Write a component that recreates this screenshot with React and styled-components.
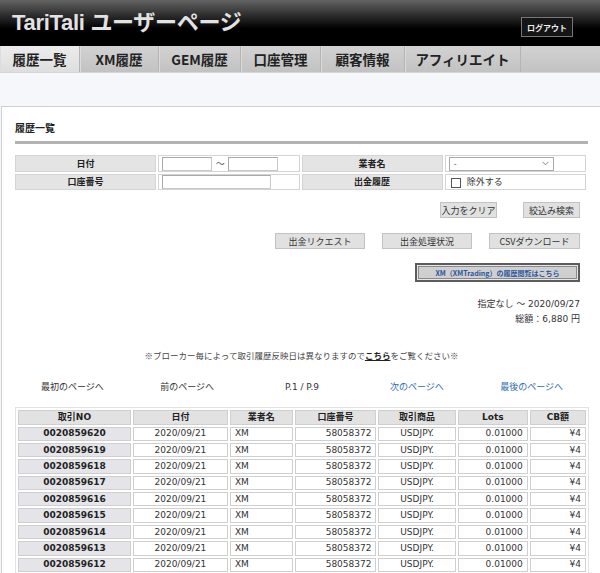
import React from 'react'
import styled, { createGlobalStyle } from 'styled-components'

const GlobalStyle = createGlobalStyle`
  html, body {
    margin: 0;
    padding: 0;
    background: #f5f7fb;
    font-family: "DejaVu Sans", "Noto Sans CJK JP", sans-serif;
    color: #333;
  }
`

const Header = styled.header`
  height: 46px;
  background: linear-gradient(#646464 0%, #2a2a2a 35%, #000 62%, #000 100%);
  display: flex;
  align-items: center;
  justify-content: space-between;
  padding: 0 27px 0 12px;

  h1 {
    margin: 0;
    margin-top: -7px;
    font-family: "Liberation Sans", "Noto Sans CJK JP", sans-serif;
    font-size: 22px;
    font-weight: 700;
    color: #e2e2e2;
    letter-spacing: -0.3px;
  }
`

const Logout = styled.button`
  width: 52px;
  height: 20px;
  margin-top: 8px;
  padding: 0;
  background: #151515;
  border: 1px solid #777;
  color: #eee;
  font-family: "Noto Sans CJK JP", sans-serif;
  font-size: 8px;
  font-weight: 700;
`

const Nav = styled.nav`
  height: 26px;
  display: flex;
  background: linear-gradient(#d2d2d2, #c2c2c2);
  border-bottom: 1px solid #d6d6d6;
`

const Tab = styled.a`
  display: flex;
  align-items: center;
  justify-content: center;
  box-sizing: border-box;
  width: ${(p) => p.w}px;
  font-family: "Noto Sans CJK JP", sans-serif;
  font-size: 13.5px;
  font-weight: 700;
  color: #222;
  border-right: 1px solid #b4b4b4;
  box-shadow: inset 1px 0 0 #dcdcdc;
  background: ${(p) => (p.active ? 'linear-gradient(#ececec, #dedede)' : 'transparent')};
`

const Spacer = styled.div`
  height: 33px;
`

const Panel = styled.main`
  margin-left: 1px;
  background: #fff;
  border-top: 1px solid #cfcfcf;
  border-left: 1px solid #cfcfcf;
  padding: 14px 12px 20px 13px;
`

const Title = styled.h2`
  margin: 0;
  font-family: "Noto Sans CJK JP", sans-serif;
  font-size: 10px;
  font-weight: 700;
  color: #222;
  line-height: 13px;
  padding-bottom: 7px;
  border-bottom: 3px solid #b2b2b2;
`

const FormTable = styled.table`
  margin-top: 9px;
  width: 575px;
  border-spacing: 2px;
  margin-left: -2px;
  table-layout: fixed;
  font-size: 9px;

  td {
    height: 14px;
    padding: 0 3px;
    border: 1px solid #d4d4d4;
    font-family: "Noto Sans CJK JP", sans-serif;
  }
`

const LabelCell = styled.td`
  background: #e4e4e4;
  text-align: center;
  font-weight: 700;
  color: #222;
`

const InputBox = styled.span`
  display: inline-block;
  vertical-align: middle;
  box-sizing: border-box;
  width: ${(p) => p.w}px;
  height: 14px;
  border: 1px solid #a9a9a9;
  border-right-color: #c8c8c8;
  border-bottom-color: #c8c8c8;
  background: #fff;
`

const Tilde = styled.span`
  display: inline-block;
  width: 16px;
  text-align: center;
  vertical-align: middle;
  color: #555;
`

const Select = styled.span`
  display: inline-flex;
  align-items: center;
  justify-content: space-between;
  vertical-align: middle;
  box-sizing: border-box;
  width: 105px;
  height: 14px;
  padding: 0 4px;
  border: 1px solid #a9a9a9;
  font-size: 8px;
  color: #333;
`

const Check = styled.span`
  display: inline-block;
  vertical-align: middle;
  width: 8px;
  height: 8px;
  border: 1px solid #555;
  margin: 0 6px 0 2px;
`

const ButtonRow = styled.div`
  display: flex;
  justify-content: flex-end;
  gap: ${(p) => p.gap}px;
  padding-right: 8px;
  margin-top: ${(p) => p.top}px;
`

const Button = styled.button`
  width: ${(p) => p.w}px;
  height: 16px;
  padding: 0;
  background: #e1e1e1;
  border: 1px solid #c2c2c2;
  font-family: "Noto Sans CJK JP", sans-serif;
  font-size: 9px;
  color: #333;
`

const XmButton = styled.button`
  width: 165px;
  height: 19px;
  padding: 0;
  background: #cfcfcf;
  border: 2px solid #5c5c5c;
  box-shadow: inset 0 0 0 1px #e6e6e6, inset 0 0 0 2px #8a8a8a;
  font-family: "Noto Sans CJK JP", sans-serif;
  font-size: 7px;
  font-weight: 700;
  color: #2b57a0;
`

const Summary = styled.div`
  margin-top: 15px;
  padding-right: 8px;
  text-align: right;
  font-family: "DejaVu Sans", "Noto Sans CJK JP", sans-serif;
  font-size: 9px;
  line-height: 15px;
  color: #333;
`

const Notice = styled.p`
  margin: 22px 0 0;
  text-align: center;
  font-family: "Noto Sans CJK JP", sans-serif;
  font-size: 8.5px;
  color: #444;

  a {
    color: #222;
    font-weight: 700;
    text-decoration: underline;
  }
`

const Pager = styled.div`
  display: grid;
  grid-template-columns: repeat(5, 1fr);
  width: 574px;
  margin-top: 20px;
  font-family: "DejaVu Sans", "Noto Sans CJK JP", sans-serif;
  font-size: 9px;
  line-height: 12px;
`

const PagerItem = styled.span`
  text-align: center;
  color: ${(p) => (p.link ? '#2f6db5' : '#333')};
`

const DataTable = styled.table`
  margin-top: 14px;
  width: 574px;
  border: 1px solid #e2e2e2;
  border-spacing: 2px;
  table-layout: fixed;
  font-family: "DejaVu Sans", "Noto Sans CJK JP", sans-serif;
  font-size: 9px;
  line-height: 11px;
  color: #333;

  th, td {
    height: 12.4px;
    padding: 0 4px;
    border: 1px solid #cfcfcf;
    white-space: nowrap;
    overflow: hidden;
  }

  th {
    background: #e2e2e2;
    font-weight: 700;
    color: #222;
  }
`

const Cell = styled.td`
  text-align: ${(p) => p.align || 'center'};
  background: ${(p) => (p.head ? '#e5e5e9' : '#fff')};
  font-weight: ${(p) => (p.head ? 700 : 400)};
  color: ${(p) => (p.head ? '#222' : '#333')};
`

const tabs = [
  ['履歴一覧', 80],
  ['XM履歴', 79],
  ['GEM履歴', 82],
  ['口座管理', 80],
  ['顧客情報', 84],
  ['アフィリエイト', 116],
]

const columns = [
  ['取引NO', '20.3%'],
  ['日付', '17.1%'],
  ['業者名', '11.3%'],
  ['口座番号', '14.7%'],
  ['取引商品', '13.9%'],
  ['Lots', '12.6%'],
  ['CB額', '10.1%'],
]

const rows = [
  '0020859620',
  '0020859619',
  '0020859618',
  '0020859617',
  '0020859616',
  '0020859615',
  '0020859614',
  '0020859613',
  '0020859612',
]

export default function App() {
  return (
    <>
      <GlobalStyle />
      <Header>
        <h1>TariTali ユーザーページ</h1>
        <Logout>ログアウト</Logout>
      </Header>
      <Nav>
        {tabs.map(([label, w], i) => (
          <Tab key={label} w={w} active={i === 0}>
            {label}
          </Tab>
        ))}
      </Nav>
      <Spacer />
      <Panel>
        <Title>履歴一覧</Title>

        <FormTable>
          <tbody>
            <tr>
              <LabelCell>日付</LabelCell>
              <td>
                <InputBox w={50} />
                <Tilde>～</Tilde>
                <InputBox w={50} />
              </td>
              <LabelCell>業者名</LabelCell>
              <td>
                <Select>
                  <span>-</span>
                  <svg width="7" height="5" viewBox="0 0 7 5">
                    <path d="M0.5 0.8 L3.5 3.8 L6.5 0.8" fill="none" stroke="#777" strokeWidth="0.9" />
                  </svg>
                </Select>
              </td>
            </tr>
            <tr>
              <LabelCell>口座番号</LabelCell>
              <td>
                <InputBox w={109} />
              </td>
              <LabelCell>出金履歴</LabelCell>
              <td>
                <Check />
                除外する
              </td>
            </tr>
          </tbody>
        </FormTable>

        <ButtonRow top={10} gap={26}>
          <Button w={57}>入力をクリア</Button>
          <Button w={57}>絞込み検索</Button>
        </ButtonRow>
        <ButtonRow top={15} gap={17}>
          <Button w={90}>出金リクエスト</Button>
          <Button w={90}>出金処理状況</Button>
          <Button w={91}>CSVダウンロード</Button>
        </ButtonRow>
        <ButtonRow top={14} gap={0}>
          <XmButton>XM（XMTrading）の履歴閲覧はこちら</XmButton>
        </ButtonRow>

        <Summary>
          <div>指定なし ～ 2020/09/27</div>
          <div>総額：6,880 円</div>
        </Summary>

        <Notice>
          ※ブローカー毎によって取引履歴反映日は異なりますので<a>こちら</a>をご覧ください※
        </Notice>

        <Pager>
          <PagerItem>最初のページへ</PagerItem>
          <PagerItem>前のページへ</PagerItem>
          <PagerItem>P.1 / P.9</PagerItem>
          <PagerItem link>次のページへ</PagerItem>
          <PagerItem link>最後のページへ</PagerItem>
        </Pager>

        <DataTable>
          <colgroup>
            {columns.map(([label, w]) => (
              <col key={label} style={{ width: w }} />
            ))}
          </colgroup>
          <thead>
            <tr>
              {columns.map(([label]) => (
                <th key={label}>{label}</th>
              ))}
            </tr>
          </thead>
          <tbody>
            {rows.map((no) => (
              <tr key={no}>
                <Cell head>{no}</Cell>
                <Cell>2020/09/21</Cell>
                <Cell align="left">XM</Cell>
                <Cell align="right">58058372</Cell>
                <Cell>USDJPY.</Cell>
                <Cell align="right">0.01000</Cell>
                <Cell align="right">¥4</Cell>
              </tr>
            ))}
          </tbody>
        </DataTable>
      </Panel>
    </>
  )
}
